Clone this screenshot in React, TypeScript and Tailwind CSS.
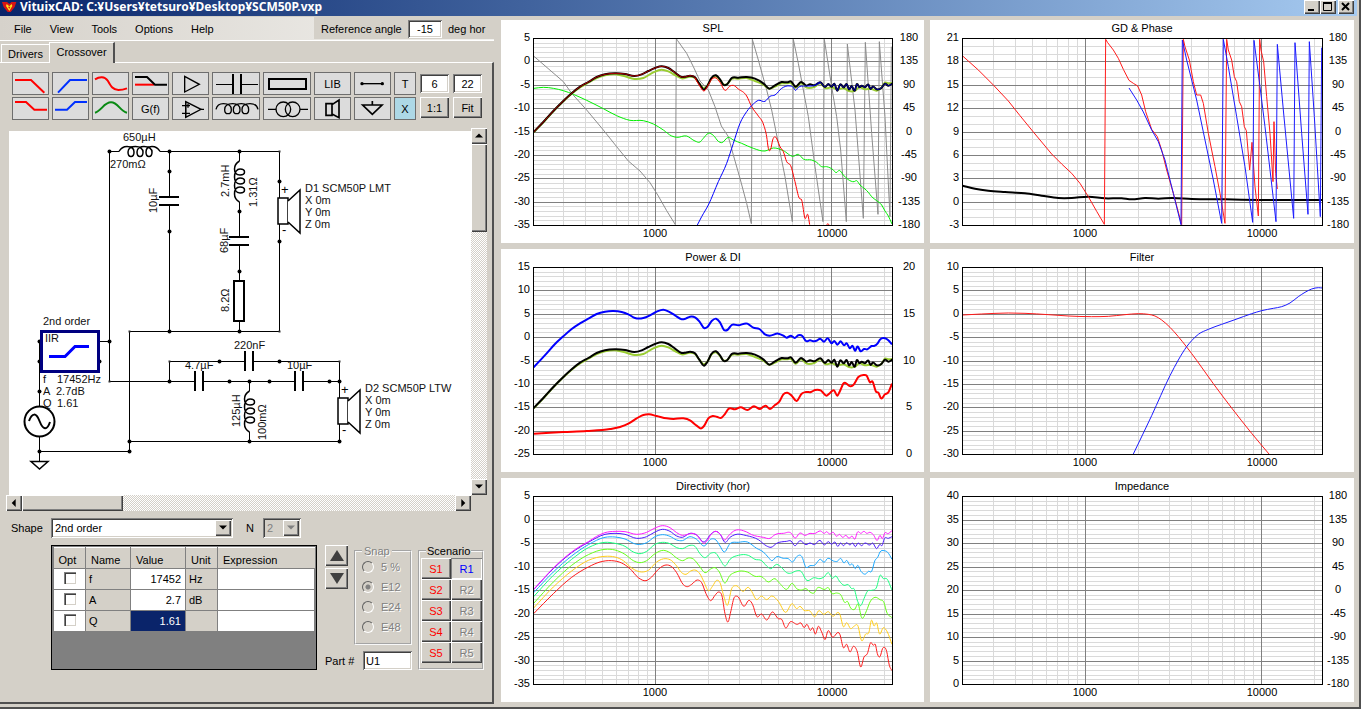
import React from "react";

const RAISED =
  "bg-[#d4d0c8] shadow-[inset_1px_1px_0_#fff,inset_-1px_-1px_0_#404040,inset_-2px_-2px_0_#808080]";
const SUNKEN =
  "shadow-[inset_1px_1px_0_#808080,inset_-1px_-1px_0_#fff,inset_2px_2px_0_#404040,inset_-2px_-2px_0_#d4d0c8]";
const CHECKER =
  "bg-[repeating-conic-gradient(#fff_0_25%,#d4d0c8_0_50%)] bg-[length:2px_2px]";

/* ---------- charts ---------- */

type Point = [number, number];
type Trace = { color: string; width?: number; sharp?: boolean; points: string; shift?: number };

function parse(points: string): Point[] {
  return points
    .trim()
    .split(/\s+/)
    .map((p) => p.split(",").map(Number) as Point);
}

// Cubic Hermite through all points, or straight segments when the trace wraps.
function toPath(points: string, sharp?: boolean): string {
  const p = parse(points);
  if (sharp) return "M" + p.map((q) => q.join(" ")).join("L");
  const last = p.length - 1;
  const slope = p.map((_, i) => {
    if (i === 0) return (p[1][1] - p[0][1]) / (p[1][0] - p[0][0]);
    if (i === last) return (p[last][1] - p[last - 1][1]) / (p[last][0] - p[last - 1][0]);
    const h0 = p[i][0] - p[i - 1][0];
    const h1 = p[i + 1][0] - p[i][0];
    const s0 = (p[i][1] - p[i - 1][1]) / h0;
    const s1 = (p[i + 1][1] - p[i][1]) / h1;
    return (s0 * h1 + s1 * h0) / (h0 + h1);
  });
  let d = `M${p[0][0]} ${p[0][1]}`;
  for (let i = 0; i < last; i++) {
    const [bx, by] = p[i];
    const [cx, cy] = p[i + 1];
    const h = (cx - bx) / 3;
    d += `C${(bx + h).toFixed(1)} ${(by + slope[i] * h).toFixed(1)} ${(cx - h).toFixed(1)} ${(cy - slope[i + 1] * h).toFixed(1)} ${cx} ${cy}`;
  }
  return d;
}

const LOW =
  "101,396 130,366 160,333 190,303 215,280 240,260 265,246 290,231 315,223 345,220 375,222 403,228 425,223 445,213 465,204 485,199 505,204 525,218 545,231 557,230 570,227 585,232 ";
const HIGH =
  "903,246 920,257 930,253 943,256 962,247 975,261 985,252 995,260 1003,251 1012,272 1020,254 1032,262 1040,252 1047,268 1055,258 1065,271 1070,253 1078,262 1085,257 1095,262 1105,254 1112,267 1118,260 1130,268 1145,263 1155,251 1165,257 1177,251";
const TOTAL =
  LOW +
  "598,251 612,269 622,258 634,234 648,226 660,238 670,254 680,254 695,234 715,233 740,231 765,236 790,250 808,266 825,256 845,246 862,247 873,244 886,260 " +
  HIGH;
const LISTEN =
  "101,397 130,367 160,334 190,304 215,281 240,262 265,248 290,234 315,226 345,223 375,229 403,237 430,234 460,217 485,209 505,214 525,225 545,235 570,230 585,234 598,251 612,265 622,257 634,236 648,229 660,240 670,253 680,253 695,237 715,236 740,234 765,243 790,254 808,266 825,260 845,250 862,250 873,249 886,263 903,250 920,263 943,261 962,250 975,264 995,262 1012,268 1032,265 1047,273 1065,272 1078,262 1095,268 1112,266 1130,272 1145,263 1155,248 1165,250 1177,249";

const PHASE_GREY =
  "102,169 190,245 215,280 260,330 310,390 350,440 385,483 420,513 450,548 475,588 500,632 526,674 529,116 533,122 560,160 580,200 600,243 625,270 645,320 664,378 685,410 700,465 720,535 740,610 754,671 757,118 775,180 800,270 815,330 835,430 855,530 877,665 880,118 895,190 925,350 945,500 969,665 973,118 995,260 1010,350 1022,450 1039,665 1042,132 1065,330 1090,655 1096,127 1115,400 1134,643 1138,125 1155,350 1170,650 1174,140";

const SPL: Trace[] = [
  { color: "#8c8c8c", sharp: true, points: PHASE_GREY },
  {
    color: "#00f000",
    points:
      "102,265 130,262 160,265 190,272 220,283 260,301 310,326 350,347 390,361 430,362 460,372 490,390 515,408 530,412 560,408 585,423 600,426 610,415 625,400 640,406 655,424 665,428 685,412 700,420 725,430 760,445 795,453 820,444 850,452 880,469 895,463 910,477 935,480 950,487 965,500 980,500 1000,510 1008,518 1018,511 1030,525 1045,539 1062,545 1070,542 1080,555 1095,567 1105,577 1115,590 1130,602 1145,615 1155,633 1165,648 1176,672",
  },
  { color: "#9acd32", width: 2, points: LISTEN },
  { color: "#000", width: 2, points: TOTAL },
  { color: "#b00000", points: LOW + "590,238" },
  {
    color: "#ff0000",
    points:
      "585,234 598,256 612,273 625,255 636,237 648,234 660,247 675,271 690,258 700,256 715,267 740,288 755,320 775,348 790,372 800,410 805,445 812,448 818,420 825,410 832,420 840,440 850,455 860,485 872,497 885,545 898,595 905,600 915,655 924,645 929,674",
  },
  { color: "#ff0000", points: "980,675 984,671 987,675" },
  {
    color: "#0000ff",
    points:
      "592,675 605,650 625,615 655,545 680,490 700,430 720,370 740,335 760,312 775,301 795,304 810,289 825,285 845,265 870,258 880,262 886,271 895,262 915,258 930,258 943,257 962,248",
  },
  { color: "#0000b8", points: HIGH.slice(HIGH.indexOf("943")) },
];

const GD: Trace[] = [
  {
    color: "#000",
    width: 2,
    points:
      "113,557 150,566 190,572 240,576 300,580 350,587 400,594 440,594 490,590 540,595 590,595 620,598 660,594 700,596 740,594 800,597 900,598 1000,600 1192,600",
  },
  {
    color: "#ff1a1a",
    sharp: true,
    points:
      "113,168 160,210 205,255 250,303 285,347 325,396 380,462 410,492 440,520 465,550 490,590 515,634 538,673 542,118 548,128 565,150 580,175 595,208 612,241 625,250 638,258 650,285 662,335 680,388 697,410 710,450 725,510 745,580 770,674 775,118 780,140 793,180 805,245 815,285 827,285 835,310 850,400 870,500 885,580 900,670 905,118 910,150 920,180 928,230 935,245 943,305 950,320 958,380 964,392 974,510 981,427 990,560 1000,648 1004,118 1008,150 1016,185 1025,290 1035,400 1044,545 1047,365 1052,520 1057,567",
  },
  {
    color: "#1a1aff",
    sharp: true,
    points:
      "612,264 635,300 655,336 680,390 700,425 720,480 745,580 768,674 772,120 785,180 815,300 840,420 865,540 890,670 895,118 910,200 935,350 960,500 983,667 987,121 1005,260 1020,380 1053,665 1057,133 1075,330 1106,655 1110,128 1130,400 1149,643 1153,125 1168,350 1186,650 1190,143",
  },
];

const POWER: Trace[] = [
  {
    color: "#0000ff",
    width: 2,
    points:
      "101,367 140,325 165,297 190,274 215,252 240,235 265,221 290,207 315,200 340,198 365,201 385,208 405,219 430,219 450,211 470,200 490,194 505,199 525,211 545,223 557,221 570,215 585,217 598,229 612,249 622,246 635,228 648,221 660,232 672,255 682,255 695,240 715,241 742,236 760,248 778,252 795,268 808,272 835,266 850,272 860,278 873,272 884,279 895,271 907,273 918,288 930,286 943,289 952,286 960,281 972,290 983,280 995,295 1003,288 1012,299 1022,289 1032,301 1040,295 1050,310 1057,302 1066,317 1072,305 1082,319 1092,312 1102,313 1115,303 1122,303 1133,295 1140,284 1155,280 1165,286 1176,298",
  },
  { color: "#9acd32", width: 2, points: LISTEN, shift: 93 },
  { color: "#000", width: 2, points: TOTAL, shift: 93 },
  {
    color: "#ff0000",
    width: 2,
    points:
      "101,566 190,561 260,558 330,552 360,546 385,536 410,520 430,510 447,508 470,513 500,520 520,522 550,520 570,526 590,542 604,550 612,543 625,520 638,513 650,515 665,518 674,508 685,492 705,493 722,487 742,495 762,484 780,492 797,482 810,492 825,480 838,470 850,448 862,443 875,452 890,468 905,446 918,441 933,441 945,435 962,436 980,452 990,444 1002,436 1012,452 1020,438 1030,416 1052,424 1060,420 1075,396 1090,390 1100,392 1110,412 1117,409 1128,440 1135,443 1143,460 1155,448 1165,442 1176,416",
  },
];

const FILTER: Trace[] = [
  {
    color: "#ff1a1a",
    points:
      "113,210 170,207 250,204 300,205 370,209 430,213 500,215 550,214 600,209 640,206 670,208 690,213 710,225 735,247 760,275 785,306 815,346 865,416 920,489 980,565 1032,627",
  },
  {
    color: "#1a1aff",
    points:
      "625,627 680,512 735,392 760,345 785,305 800,287 820,268 850,253 890,238 930,224 980,206 1010,197 1045,190 1070,185 1095,174 1120,155 1140,142 1160,132 1180,128 1192,129",
  },
];

const DIRECTIVITY: Trace[] = [
  {
    color: "#ff1a1a",
    points:
      "101,425 160,365 215,316 265,285 300,270 335,266 365,273 390,290 415,317 438,326 455,315 475,292 498,279 515,284 530,302 550,338 562,344 575,337 592,324 605,332 618,365 632,386 645,370 656,360 666,372 675,425 684,450 692,420 702,378 712,373 732,403 748,385 758,398 770,433 785,426 800,444 817,420 835,440 845,442 857,468 870,450 892,457 903,453 913,467 920,457 932,475 938,467 946,486 955,463 965,480 976,502 983,478 997,495 1020,488 1030,527 1040,517 1050,540 1060,523 1072,540 1082,585 1092,555 1102,545 1112,512 1120,520 1126,517 1132,545 1140,554 1148,529 1160,538 1168,580 1176,596",
  },
  {
    color: "#ffcc1a",
    points:
      "101,408 160,345 215,297 265,265 315,253 345,255 370,266 395,288 425,300 445,295 470,270 498,260 515,266 530,282 545,302 558,307 572,297 588,295 600,306 612,330 625,356 638,342 650,325 660,332 672,375 682,400 695,350 708,341 730,358 745,346 755,358 768,382 785,372 800,383 815,372 835,388 857,421 877,395 890,410 900,403 912,415 930,417 945,434 955,417 972,427 985,419 997,432 1020,428 1030,464 1040,452 1052,470 1063,462 1073,460 1085,506 1097,486 1107,480 1114,445 1122,462 1130,453 1138,485 1150,467 1162,480 1176,517",
  },
  {
    color: "#66ff1a",
    points:
      "101,394 160,330 215,280 265,248 315,232 345,234 375,247 400,266 420,272 440,266 465,245 490,235 510,242 530,258 548,266 565,258 580,261 598,282 615,302 632,291 645,287 658,300 674,333 690,310 705,301 742,300 765,313 785,314 805,330 825,320 840,335 860,352 877,334 890,350 905,354 918,350 930,360 943,362 950,350 975,352 985,347 995,364 1010,363 1022,368 1035,392 1042,388 1052,408 1065,411 1074,396 1085,437 1100,415 1110,390 1125,376 1140,383 1152,392 1160,420 1176,437",
  },
  {
    color: "#1aff80",
    points:
      "101,374 160,310 215,262 265,227 315,211 345,214 375,223 400,240 420,245 440,238 465,217 488,211 510,215 530,227 547,230 570,220 585,223 600,245 613,257 634,243 648,244 660,262 675,282 690,262 715,250 745,250 765,262 785,266 800,282 812,290 830,277 845,287 860,302 875,303 885,298 905,300 918,323 943,317 960,320 972,315 985,302 997,319 1008,312 1018,327 1032,340 1045,338 1055,350 1062,350 1073,388 1082,401 1092,380 1102,358 1115,355 1130,345 1140,310 1150,320 1160,320 1176,354",
  },
  {
    color: "#1aa8ff",
    points:
      "101,362 160,300 215,252 265,218 315,196 345,195 375,201 410,217 440,212 465,194 488,188 510,193 530,204 547,206 570,194 590,202 612,222 634,201 648,204 660,222 672,240 690,215 715,211 742,210 770,229 790,240 805,256 815,266 830,254 850,259 865,260 878,270 890,254 905,253 918,286 930,281 943,280 962,262 972,271 983,259 1000,267 1012,268 1022,259 1032,273 1040,265 1050,280 1056,275 1066,290 1073,280 1083,298 1097,306 1105,298 1115,298 1125,265 1133,256 1140,240 1152,236 1163,241 1176,262",
  },
  {
    color: "#4d1aff",
    points:
      "101,353 160,290 215,242 265,211 315,187 345,184 375,187 410,199 440,194 465,180 488,172 510,178 530,192 547,196 570,184 590,189 612,210 634,185 648,178 660,186 675,211 690,196 705,188 740,191 775,203 800,222 813,226 830,214 860,208 873,207 884,221 900,206 918,218 930,213 943,218 960,205 973,219 985,209 995,217 1005,210 1013,223 1022,213 1030,221 1040,212 1050,219 1058,213 1066,224 1074,213 1084,221 1095,213 1110,219 1118,213 1130,230 1140,217 1146,221 1153,200 1165,199 1176,194",
  },
  {
    color: "#ff1aff",
    points:
      "101,352 130,320 160,288 190,260 215,240 240,223 265,209 290,193 315,182 345,178 375,179 410,187 440,181 465,168 488,161 510,167 530,182 547,190 560,188 575,184 590,189 604,207 612,214 620,208 634,186 648,178 660,186 675,204 685,192 700,178 740,180 755,188 790,196 810,199 825,188 850,184 875,185 884,198 900,183 915,190 930,184 943,185 962,177 973,184 980,179 988,186 1000,181 1010,193 1018,187 1028,196 1038,190 1047,199 1056,192 1065,201 1072,181 1083,184 1092,178 1100,184 1110,181 1120,188 1132,205 1140,190 1147,200 1155,182 1163,185 1176,176",
  },
];

type ChartProps = {
  title: string;
  width: number;
  height: number;
  left: string[];
  right?: string[];
  minor?: number;
  traces?: Trace[];
  // Origin of the trace grid, which is three times finer than the panel.
  origin?: Point;
};

const FREQS = [300, 400, 500, 600, 700, 800, 900, 1000, 2000, 3000, 4000, 5000, 6000, 7000, 8000, 9000, 10000, 20000];

function Chart({ title, width, height, left, right = [], minor = 5, traces = [], origin = [0, 0] }: ChartProps) {
  const x0 = 32;
  const x1 = width - 32;
  const y0 = 18;
  const y1 = height - 18;
  const fx = (f: number) => Math.floor(x0 + ((x1 - x0) * Math.log10(f / 200)) / Math.log10(110));
  const steps = left.length - 1;
  const fy = (i: number, n: number) => Math.round(y0 + ((y1 - y0) * i) / n);
  const isMajor = (f: number) => f === 1000 || f === 10000;
  const rows = Array.from({ length: steps * minor + 1 }, (_, i) => i);
  return (
    <svg viewBox={`0 0 ${width} ${height}`} className="block h-auto w-full bg-white text-[11px]" role="img" aria-label={title}>
      <g shapeRendering="crispEdges" strokeWidth="1" transform="translate(0.5 0.5)">
        <g stroke="#dadada">
          {rows.filter((i) => i % minor).map((i) => (
            <line key={i} x1={x0} x2={x1} y1={fy(i, steps * minor)} y2={fy(i, steps * minor)} />
          ))}
          {FREQS.filter((f) => !isMajor(f)).map((f) => (
            <line key={f} x1={fx(f)} x2={fx(f)} y1={y0} y2={y1} />
          ))}
        </g>
        <g stroke="#808080">
          {rows.filter((i) => i % minor === 0).map((i) => (
            <line key={i} x1={x0} x2={x1} y1={fy(i, steps * minor)} y2={fy(i, steps * minor)} />
          ))}
          {FREQS.filter(isMajor).map((f) => (
            <line key={f} x1={fx(f)} x2={fx(f)} y1={y0} y2={y1} />
          ))}
        </g>
      </g>
      <g transform={`scale(0.33333) translate(${-origin[0]} ${-origin[1]})`} fill="none" strokeLinejoin="round">
        {traces.map((t, i) => (
          <path
            key={i}
            d={toPath(t.points, t.sharp)}
            stroke={t.color}
            strokeWidth={(t.width ?? 1) * 3}
            transform={t.shift ? `translate(0 ${t.shift})` : undefined}
          />
        ))}
      </g>
      <rect x={x0 + 0.5} y={y0 + 0.5} width={x1 - x0} height={y1 - y0} fill="none" stroke="#000" shapeRendering="crispEdges" />
      <text x="212" y="12" textAnchor="middle">{title}</text>
      {left.map((v, i) => (
        <text key={v} x="29" y={fy(i, steps) + 3} textAnchor="end">{v}</text>
      ))}
      {right.map((v, i) => (
        <text key={v} x="408" y={fy(i, right.length - 1) + 3} textAnchor="middle">{v}</text>
      ))}
      <text x={fx(1000)} y={y1 + 12} textAnchor="middle">1000</text>
      <text x={fx(10000) + 1} y={y1 + 12} textAnchor="middle">10000</text>
    </svg>
  );
}

const range = (from: number, to: number, step: number) => {
  const out: string[] = [];
  for (let v = from; v >= to; v -= step) out.push(String(v));
  return out;
};
const DEG = range(180, -180, 45);

/* ---------- toolbar ---------- */

const RED = "#ff0000";
const BLUE = "#0030ff";

type Tool = { name: string; wide?: boolean; text?: string; active?: boolean; icon?: React.ReactNode };

const TOOLS: Tool[] = [
  { name: "Low pass", icon: <path d="M9 24H57L97 62" stroke={RED} strokeWidth="6" /> },
  { name: "High pass", icon: <path d="M18 62L54 24H105" stroke={BLUE} strokeWidth="6" /> },
  { name: "All pass", icon: <path d="M9 22C22 14 38 12 48 27C57 43 63 54 79 54C90 54 97 52 105 49" stroke={RED} strokeWidth="6" /> },
  {
    name: "Shelf",
    icon: (
      <>
        <path d="M9 38H66" stroke={RED} strokeWidth="6" />
        <path d="M9 15H45L69 38H105" strokeWidth="6" />
      </>
    ),
  },
  { name: "Buffer", icon: <path d="M38 13V60L82 37Z" strokeWidth="4" /> },
  {
    name: "Capacitor",
    wide: true,
    icon: (
      <>
        <path d="M12 37.500H63M87 37.500H138" strokeWidth="3" />
        <path d="M63 6V66M87 6V66" strokeWidth="6" />
      </>
    ),
  },
  { name: "Resistor", wide: true, icon: <rect x="18" y="21" width="111" height="30" strokeWidth="6" /> },
  { name: "Library", text: "LIB" },
  {
    name: "Wire",
    icon: (
      <>
        <path d="M24 35H85" strokeWidth="4" />
        <circle cx="24" cy="35" r="5" fill="#000" stroke="none" />
        <circle cx="85" cy="35" r="5" fill="#000" stroke="none" />
      </>
    ),
  },
  { name: "Text", text: "T" },
  { name: "Low shelf", icon: <path d="M9 15H42L67 38H105" stroke={RED} strokeWidth="6" /> },
  { name: "High shelf", icon: <path d="M9 38H45L69 15H105" stroke={BLUE} strokeWidth="6" /> },
  { name: "Peak", icon: <path d="M9 47C28 42 36 16 57 16C78 16 84 42 105 47" stroke="#0a8a14" strokeWidth="6" /> },
  { name: "Transfer function", text: "G(f)" },
  {
    name: "Op amp",
    icon: (
      <>
        <path d="M41 14V61L87 37Z" strokeWidth="4" />
        <path d="M30 26H54M41 14V61M30 49H54M87 37H96M48 20V32" strokeWidth="4" />
      </>
    ),
  },
  {
    name: "Inductor",
    wide: true,
    icon: (
      <>
        <path
          d="M12 37C15 24 24 20 34 20C50 20 58 28 58 38C58 54 38 54 38 38C38 26 48 20 62 20C78 20 84 28 84 38C84 54 64 54 64 38C64 26 74 20 88 20C104 20 110 28 110 38C110 54 90 54 90 38C90 26 100 20 114 20C126 20 135 24 138 37"
          strokeWidth="4"
        />
      </>
    ),
  },
  {
    name: "Transformer",
    wide: true,
    icon: (
      <>
        <circle cx="61" cy="37" r="22" strokeWidth="4" />
        <circle cx="89" cy="37" r="22" strokeWidth="4" />
        <path d="M15 37H39M111 37H135" strokeWidth="4" />
      </>
    ),
  },
  { name: "Driver", icon: <path d="M36 20H54V55H36ZM54 23L75 9V62L54 51" strokeWidth="5" /> },
  { name: "Ground", icon: <path d="M55 12V23M26 24H84L55 52Z" strokeWidth="5" /> },
  { name: "Delete", text: "X", active: true },
];

function ToolButton({ tool }: { tool: Tool }) {
  return (
    <button
      type="button"
      title={tool.name}
      aria-label={tool.name}
      className={
        "flex items-center justify-center text-center shadow-[inset_0_0_0_1px_#6e6e6e] " +
        (tool.active ? "bg-[#add8e6]" : "bg-[#dcdcdc]")
      }
    >
      {tool.text ?? (
        <svg viewBox={tool.wide ? "0 0 144 69" : "0 0 111 69"} className="block size-full" fill="none" stroke="#000">
          {tool.icon}
        </svg>
      )}
    </button>
  );
}

/* ---------- schematic ---------- */

const WIRES =
  "M119 151.5H109.5V381.5H195M160 151.5H279.5V198M169.5 151.5V197M169.5 205V331.5M239.5 151.5V161M239.5 202V237M239.5 245V281M239.5 321V331.5M279.5 224V331.5H129.5V451.5H39.5M129.5 441.5H339.5V424M203 381.5H295M303 381.5H339.5M169.5 381.5V361.5H245M253 361.5H339.5V398M249.5 381.5V391M249.5 432V441.5M99 341.5H109.5M39.5 341.5V406M39.5 437V461";
const PLATES =
  "M159 197H179M159 205H179M229 237H249M229 245H249M195 371V391M203 371V391M295 371V391M303 371V391M245 351V371M253 351V371";
const DOTS: Point[] = [
  [109.5, 151.5], [169.5, 151.5], [169.5, 171.5], [169.5, 231.5], [169.5, 331.5], [239.5, 151.5], [239.5, 211.5],
  [239.5, 271.5], [239.5, 331.5], [279.5, 181.5], [279.5, 241.5], [109.5, 341.5], [39.5, 341.5], [39.5, 361.5],
  [99.5, 361.5], [39.5, 391.5], [39.5, 451.5], [129.5, 451.5], [129.5, 441.5], [169.5, 381.5], [229.5, 381.5],
  [249.5, 381.5], [269.5, 381.5], [329.5, 381.5], [339.5, 381.5], [219.5, 361.5], [279.5, 361.5], [249.5, 441.5],
  [339.5, 441.5],
];
const CORNERS: Point[] = [
  [279.5, 151.5], [279.5, 331.5], [129.5, 331.5], [169.5, 361.5], [339.5, 361.5], [109.5, 381.5],
];
const COIL =
  "M0 0.5C2 -3 4 -4.5 8 -4.5C13 -4.5 15 -2 15 1C15 7 9 7 9 1C9 -3 13 -4.5 16.5 -4.5C21 -4.5 24 -2 24 1C24 7 18 7 18 1C18 -3 22 -4.5 25 -4.5C30 -4.5 33 -2 33 1C33 7 27 7 27 1C27 -3 30 -4.5 33 -4.5C37 -4.5 39 -3 41 0.5";
const LABELS: [number, number, string][] = [
  [123, 141, "650µH"], [110, 168, "270mΩ"], [43, 325, "2nd order"], [45, 342, "IIR"],
  [43, 383, "f"], [57, 383, "17452Hz"], [43, 395, "A"], [56, 395, "2.7dB"], [43, 407, "Q"], [57, 407, "1.61"],
  [234, 349, "220nF"], [185, 369, "4.7µF"], [287, 369, "10µF"],
  [305, 192, "D1 SCM50P LMT"], [305, 204, "X 0m"], [305, 216, "Y 0m"], [305, 228, "Z 0m"],
  [365, 392, "D2 SCM50P LTW"], [365, 404, "X 0m"], [365, 416, "Y 0m"], [365, 428, "Z 0m"],
];
const UPRIGHT: [number, number, string][] = [
  [157, 213, "10µF"], [229, 197, "2.7mH"], [257, 207, "1.31Ω"], [228, 253, "68µF"], [229, 312, "8.2Ω"],
  [240, 427, "125µH"], [266, 440, "100mΩ"],
];

function Driver({ x, y }: { x: number; y: number }) {
  return (
    <g transform={`translate(${x} ${y})`} fill="#fff" stroke="#000" strokeWidth="1.500">
      <rect x="-2" y="0" width="10" height="26" />
      <path d="M8 3L20 -8V35L8 24" />
      <text x="1" y="-4" fill="#000" stroke="none" fontSize="13">+</text>
      <text x="2" y="36" fill="#000" stroke="none" fontSize="13">-</text>
    </g>
  );
}

function Schematic() {
  return (
    <svg viewBox="9 131 462 364" className="block h-auto w-full bg-white text-[11px]" role="img" aria-label="Crossover schematic">
      <path d={WIRES} fill="none" stroke="#000" />
      <path d={PLATES} fill="none" stroke="#000" strokeWidth="2" />
      <g fill="none" stroke="#000" strokeWidth="1.500">
        <path d={COIL} transform="translate(119 151)" />
        <path d={COIL} transform="translate(239 202) rotate(-90)" />
        <path d={COIL} transform="translate(249 432) rotate(-90)" />
      </g>
      <rect x="234" y="281" width="10" height="40" fill="#fff" stroke="#000" strokeWidth="2" />
      {DOTS.map(([x, y]) => (
        <circle key={`${x}-${y}`} cx={x} cy={y} r="2" />
      ))}
      {CORNERS.map(([x, y]) => (
        <rect key={`${x}-${y}`} x={x - 1} y={y - 1} width="2" height="2" fill="#333" />
      ))}
      <rect x="41.500" y="331.500" width="57" height="40" fill="#fff" stroke="#000080" strokeWidth="3" />
      <path d="M49 356.500H65L75 346.500H89" fill="none" stroke="#0000ff" strokeWidth="3" />
      <circle cx="39.500" cy="421.500" r="15" fill="#fff" stroke="#000" strokeWidth="2" />
      <path d="M29 421C32 413 36 412 39.500 421C43 430 47 431 50 422" fill="none" stroke="#000" strokeWidth="2" />
      <path d="M31 461.500H48L39.500 469Z" fill="#fff" stroke="#000" strokeWidth="1.500" />
      <Driver x={280} y={198} />
      <Driver x={340} y={398} />
      {LABELS.map(([x, y, s]) => (
        <text key={`${x}-${y}`} x={x} y={y} fill="#111">{s}</text>
      ))}
      {UPRIGHT.map(([x, y, s]) => (
        <text key={`${x}-${y}`} transform={`translate(${x} ${y}) rotate(-90)`} fill="#111">{s}</text>
      ))}
    </svg>
  );
}

/* ---------- small widgets ---------- */

function Arrow({ dir, big, color = "#000" }: { dir: "up" | "down" | "left" | "right"; big?: boolean; color?: string }) {
  const vertical = dir === "up" || dir === "down";
  const d = big
    ? { up: "M0 12L7 1L14 12Z", down: "M0 1H14L7 12Z", left: "", right: "" }[dir]
    : { up: "M0 8L7 1L14 8Z", down: "M0 1H14L7 8Z", left: "M10 0V14L3 7Z", right: "M4 0V14L11 7Z" }[dir];
  const box = big ? "0 0 14 13" : vertical ? "0 0 14 9" : "0 0 14 14";
  return (
    <svg viewBox={box} className={big ? "w-[14px]" : "w-[8px]"} fill={color} aria-hidden="true">
      <path d={d} />
    </svg>
  );
}

function ScrollButton({ dir }: { dir: "up" | "down" | "left" | "right" }) {
  return (
    <button type="button" aria-label={`Scroll ${dir}`} className={`flex size-4 shrink-0 items-center justify-center ${RAISED}`}>
      <Arrow dir={dir} />
    </button>
  );
}

function Select({ label, value, disabled, className }: { label: string; value: string; disabled?: boolean; className: string }) {
  return (
    <span className={`relative block h-5 ${className}`}>
      <select
        id={label}
        disabled={disabled}
        defaultValue={value}
        className={`h-full w-full appearance-none pl-1 opacity-100 ${SUNKEN} ${disabled ? "bg-[#d4d0c8] text-[#808080]" : "bg-white"}`}
      >
        <option>{value}</option>
      </select>
      <span className={`pointer-events-none absolute top-[2px] right-[2px] flex size-4 items-center justify-center ${RAISED}`}>
        <Arrow dir="down" color={disabled ? "#808080" : "#000"} />
      </span>
    </span>
  );
}

const ROWS = [
  { name: "f", value: "17452", unit: "Hz" },
  { name: "A", value: "2.7", unit: "dB" },
  { name: "Q", value: "1.61", unit: "", selected: true },
];

function ParameterTable() {
  const head = "h-[21px] border-r border-[#808080] px-[5px] pt-1 text-left font-normal";
  const cell = "h-[21px] border border-[#808080] p-0";
  return (
    <div className="w-[266px] border border-black bg-[#808080] p-px">
      <table className="w-full table-fixed border-collapse">
        <colgroup>
          <col className="w-[32px]" />
          <col className="w-[45px]" />
          <col className="w-[55px]" />
          <col className="w-[32px]" />
          <col />
        </colgroup>
        <thead className="border-t border-white bg-[#d4d0c8]">
          <tr>
            <th className={head}>Opt</th>
            <th className={head}>Name</th>
            <th className={head}>Value</th>
            <th className={head}>Unit</th>
            <th className="px-[5px] pt-1 text-left font-normal">Expression</th>
          </tr>
        </thead>
        <tbody>
          {ROWS.map((r) => (
            <tr key={r.name}>
              <td className={`${cell} bg-white`}>
                <input
                  type="checkbox"
                  aria-label={`Optimize ${r.name}`}
                  className="mx-auto mb-[3px] block size-3 appearance-none bg-white shadow-[inset_1px_1px_0_#808080,inset_2px_2px_0_#404040,inset_-1px_-1px_0_#d4d0c8]"
                />
              </td>
              <td className={`${cell} bg-[#d4d0c8] pl-[3px]`}>{r.name}</td>
              <td className={`${cell} pr-1 text-right ${r.selected ? "bg-[#0a246a] text-white" : "bg-white"}`}>{r.value}</td>
              <td className={`${cell} bg-[#d4d0c8] pl-[3px]`}>{r.unit}</td>
              <td className={`${cell} bg-white`} />
            </tr>
          ))}
        </tbody>
      </table>
    </div>
  );
}

const GROUP = "border-2 border-[#f8f8f8] [border-style:groove]";
const EMBOSSED = "text-[#808080] [text-shadow:1px_1px_0_#fff]";

export default function App() {
  return (
    <div className="flex min-h-screen flex-col border-r-2 border-b-2 border-[#505050] bg-[#d4d0c8] font-['Liberation_Sans',Arial,sans-serif] text-[11px] leading-[14px] text-black">
      <header className="mr-[2px] mb-px flex h-4 items-start bg-linear-to-r from-[#0a246a] to-[#a6caf0] text-white">
        <svg viewBox="0 0 48 39" className="mt-px ml-px h-[13px] w-4 shrink-0" aria-hidden="true">
          <path d="M3 3H18L25 9L31 3H46L41 18L29 33H20L8 18Z" fill="#d81414" />
          <path d="M17 9L25 16L32 9L34 15L25 30L15 15Z" fill="#ffe11a" />
          <path d="M21 17H28L25 24Z" fill="#d81414" />
        </svg>
        <h1 className="flex-1 pl-[3px] font-['Noto_Sans','Liberation_Sans',sans-serif] text-[12px] leading-[14px] font-bold">
          VituixCAD: C:¥Users¥tetsuro¥Desktop¥SCM50P.vxp
        </h1>
        <div className="flex pr-[3px]">
          <button type="button" aria-label="Minimize" className={`h-[14px] w-4 ${RAISED}`}>
            <svg viewBox="0 0 16 14" className="block size-full"><path d="M4 10H10" stroke="#000" strokeWidth="2" /></svg>
          </button>
          <button type="button" aria-label="Maximize" className={`h-[14px] w-4 ${RAISED}`}>
            <svg viewBox="0 0 16 14" className="block size-full"><path d="M3.500 3V10.500H11.500V3" stroke="#000" strokeWidth="1" fill="none" /><path d="M3 3H12" stroke="#000" strokeWidth="2" /></svg>
          </button>
          <button type="button" aria-label="Close" className={`ml-[2px] h-[14px] w-4 ${RAISED}`}>
            <svg viewBox="0 0 16 14" className="block size-full"><path d="M4 3L11 10M11 3L4 10" stroke="#000" strokeWidth="2" /></svg>
          </button>
        </div>
      </header>

      <div className="flex flex-1 items-stretch">
        <aside className="flex w-[494px] shrink-0 flex-col">
          <div className="mb-px flex h-6 items-start border-b border-white bg-linear-to-r from-[#d6d2cb] to-[#f2f1ee]">
            <nav className="flex flex-1 items-center pt-[5px] pl-[5px]">
              {["File", "View", "Tools", "Options", "Help"].map((m) => (
                <button key={m} type="button" className="px-[9px]">{m}</button>
              ))}
            </nav>
            <div className="flex h-[22px] w-[180px] items-center bg-[#d4d0c8] pt-[2px] pl-[7px]">
              <label htmlFor="angle" className="w-[87px]">Reference angle</label>
              <input id="angle" defaultValue="-15" className={`h-[18px] w-[34px] bg-white text-center ${SUNKEN}`} />
              <span className="pl-[6px]">deg hor</span>
            </div>
          </div>

          <div role="tablist" className="flex h-5 items-end pl-px">
            <button type="button" role="tab" className="h-[18px] w-12 border-t border-l border-white">Drivers</button>
            <button
              type="button"
              role="tab"
              aria-selected="true"
              className="relative -mb-px h-[21px] w-[66px] border-t border-r-2 border-l border-t-white border-r-[#505050] border-l-white bg-[#d4d0c8] pb-[2px]"
            >
              Crossover
            </button>
          </div>

          <section className="mb-[3px] flex-1 border-t border-r-2 border-b-2 border-t-white border-r-[#505050] border-b-[#505050] pt-[9px]">
            <div className="flex gap-1 pl-3">
              <div className="grid grid-cols-[repeat(5,37px)_48px_48px_37px_37px_22px] grid-rows-[23px_23px] gap-x-[3px] gap-y-[2px]">
                {TOOLS.map((t) => (
                  <ToolButton key={t.name} tool={t} />
                ))}
              </div>
              <div className="grid grid-cols-[29px_29px] grid-rows-[23px_23px] items-center gap-x-1 gap-y-[2px]">
                <input aria-label="Line grid" defaultValue="6" className={`h-[19px] w-full bg-white text-center ${SUNKEN}`} />
                <input aria-label="Grid size" defaultValue="22" className={`h-[19px] w-full bg-white text-center ${SUNKEN}`} />
                <button type="button" className={`h-[21px] self-start ${RAISED}`}>1:1</button>
                <button type="button" className={`h-[21px] self-start ${RAISED}`}>Fit</button>
              </div>
            </div>

            <div className="mt-2 mr-[5px] ml-[6px] grid grid-cols-[1fr_16px] grid-rows-[auto_16px]">
              <div className="pt-[3px] pl-[3px]">
                <Schematic />
              </div>
              <div className={`flex flex-col ${CHECKER}`}>
                <ScrollButton dir="up" />
                <div className={`h-[88px] ${RAISED}`} />
                <div className="flex-1" />
                <ScrollButton dir="down" />
              </div>
              <div className={`flex ${CHECKER}`}>
                <ScrollButton dir="left" />
                <div className={`w-[101px] ${RAISED}`} />
                <div className="flex-1" />
                <ScrollButton dir="right" />
              </div>
            </div>

            <div className="mt-[7px] flex items-center">
              <label htmlFor="Shape" className="w-[51px] pl-[11px]">Shape</label>
              <Select label="Shape" value="2nd order" className="w-[182px]" />
              <label htmlFor="N" className="w-[30px] pl-[13px]">N</label>
              <Select label="N" value="2" disabled className="w-[38px]" />
            </div>

            <div className="mt-[7px] flex h-[125px] items-stretch pl-[51px]">
              <ParameterTable />
              <div className="ml-2 flex w-[87px] flex-col justify-between">
                <div className="flex items-start gap-[6px]">
                  <div className="flex flex-col gap-[2px]">
                    <button type="button" aria-label="Increase" className={`flex h-[21px] w-[23px] items-center justify-center ${RAISED}`}>
                      <Arrow dir="up" big color="#404040" />
                    </button>
                    <button type="button" aria-label="Decrease" className={`flex h-[21px] w-[23px] items-center justify-center ${RAISED}`}>
                      <Arrow dir="down" big color="#404040" />
                    </button>
                  </div>
                  <fieldset disabled className={`h-[100px] flex-1 ${GROUP} ${EMBOSSED}`}>
                    <legend className="ml-[6px] px-[2px] leading-3">Snap</legend>
                    {["5 %", "E12", "E24", "E48"].map((s) => (
                      <label key={s} className="flex h-5 items-center gap-[7px] pl-[6px]">
                        <input
                          type="radio"
                          name="snap"
                          defaultChecked={s === "E12"}
                          className="size-3 appearance-none rounded-full border border-t-[#606060] border-r-white border-b-white border-l-[#606060] checked:bg-[radial-gradient(#808080_0_2px,transparent_3px)]"
                        />
                        {s}
                      </label>
                    ))}
                  </fieldset>
                </div>
                <div className="flex items-center">
                  <label htmlFor="part" className="w-[38px] whitespace-nowrap">Part #</label>
                  <input id="part" defaultValue="U1" className={`h-[19px] w-[49px] bg-white pl-[3px] ${SUNKEN}`} />
                </div>
              </div>
              <fieldset className={`ml-[6px] w-[66px] ${GROUP}`}>
                <legend className="ml-[6px] px-px leading-3">Scenario</legend>
                <div className="ml-px grid auto-rows-[21px] grid-cols-[30px_31px] pt-px">
                  {[1, 2, 3, 4, 5].map((n) => (
                    <React.Fragment key={n}>
                      <button type="button" className={`text-[#ff0000] ${RAISED}`}>{`S${n}`}</button>
                      <button
                        type="button"
                        disabled={n > 1}
                        className={
                          n === 1
                            ? "bg-[#d8d5ce] text-[#0000ff] shadow-[inset_1px_1px_0_#808080,inset_-1px_-1px_0_#fff]"
                            : `${RAISED} ${EMBOSSED}`
                        }
                      >
                        {`R${n}`}
                      </button>
                    </React.Fragment>
                  ))}
                </div>
              </fieldset>
            </div>
          </section>
        </aside>

        <main className="grid min-w-0 flex-1 grid-cols-[423fr_424fr] content-start gap-[6px] pt-[3px] pr-[5px] pb-[5px] pl-[7px]">
          <Chart title="SPL" width={423} height={223} left={range(5, -35, 5)} right={DEG} traces={SPL} origin={[3, 60]} />
          <Chart title="GD & Phase" width={424} height={223} left={range(21, -3, 3)} minor={3} right={DEG} traces={GD} origin={[15, 60]} />
          <Chart title="Power & DI" width={423} height={223} left={range(15, -25, 5)} right={["20", "15", "10", "5", "0"]} traces={POWER} origin={[3, 12]} />
          <Chart title="Filter" width={424} height={223} left={range(10, -30, 5)} traces={FILTER} origin={[15, 12]} />
          <Chart title="Directivity (hor)" width={423} height={224} left={range(5, -35, 5)} traces={DIRECTIVITY} origin={[3, 18]} />
          <Chart title="Impedance" width={424} height={224} left={range(40, 0, 5)} right={DEG} />
        </main>
      </div>
    </div>
  );
}
